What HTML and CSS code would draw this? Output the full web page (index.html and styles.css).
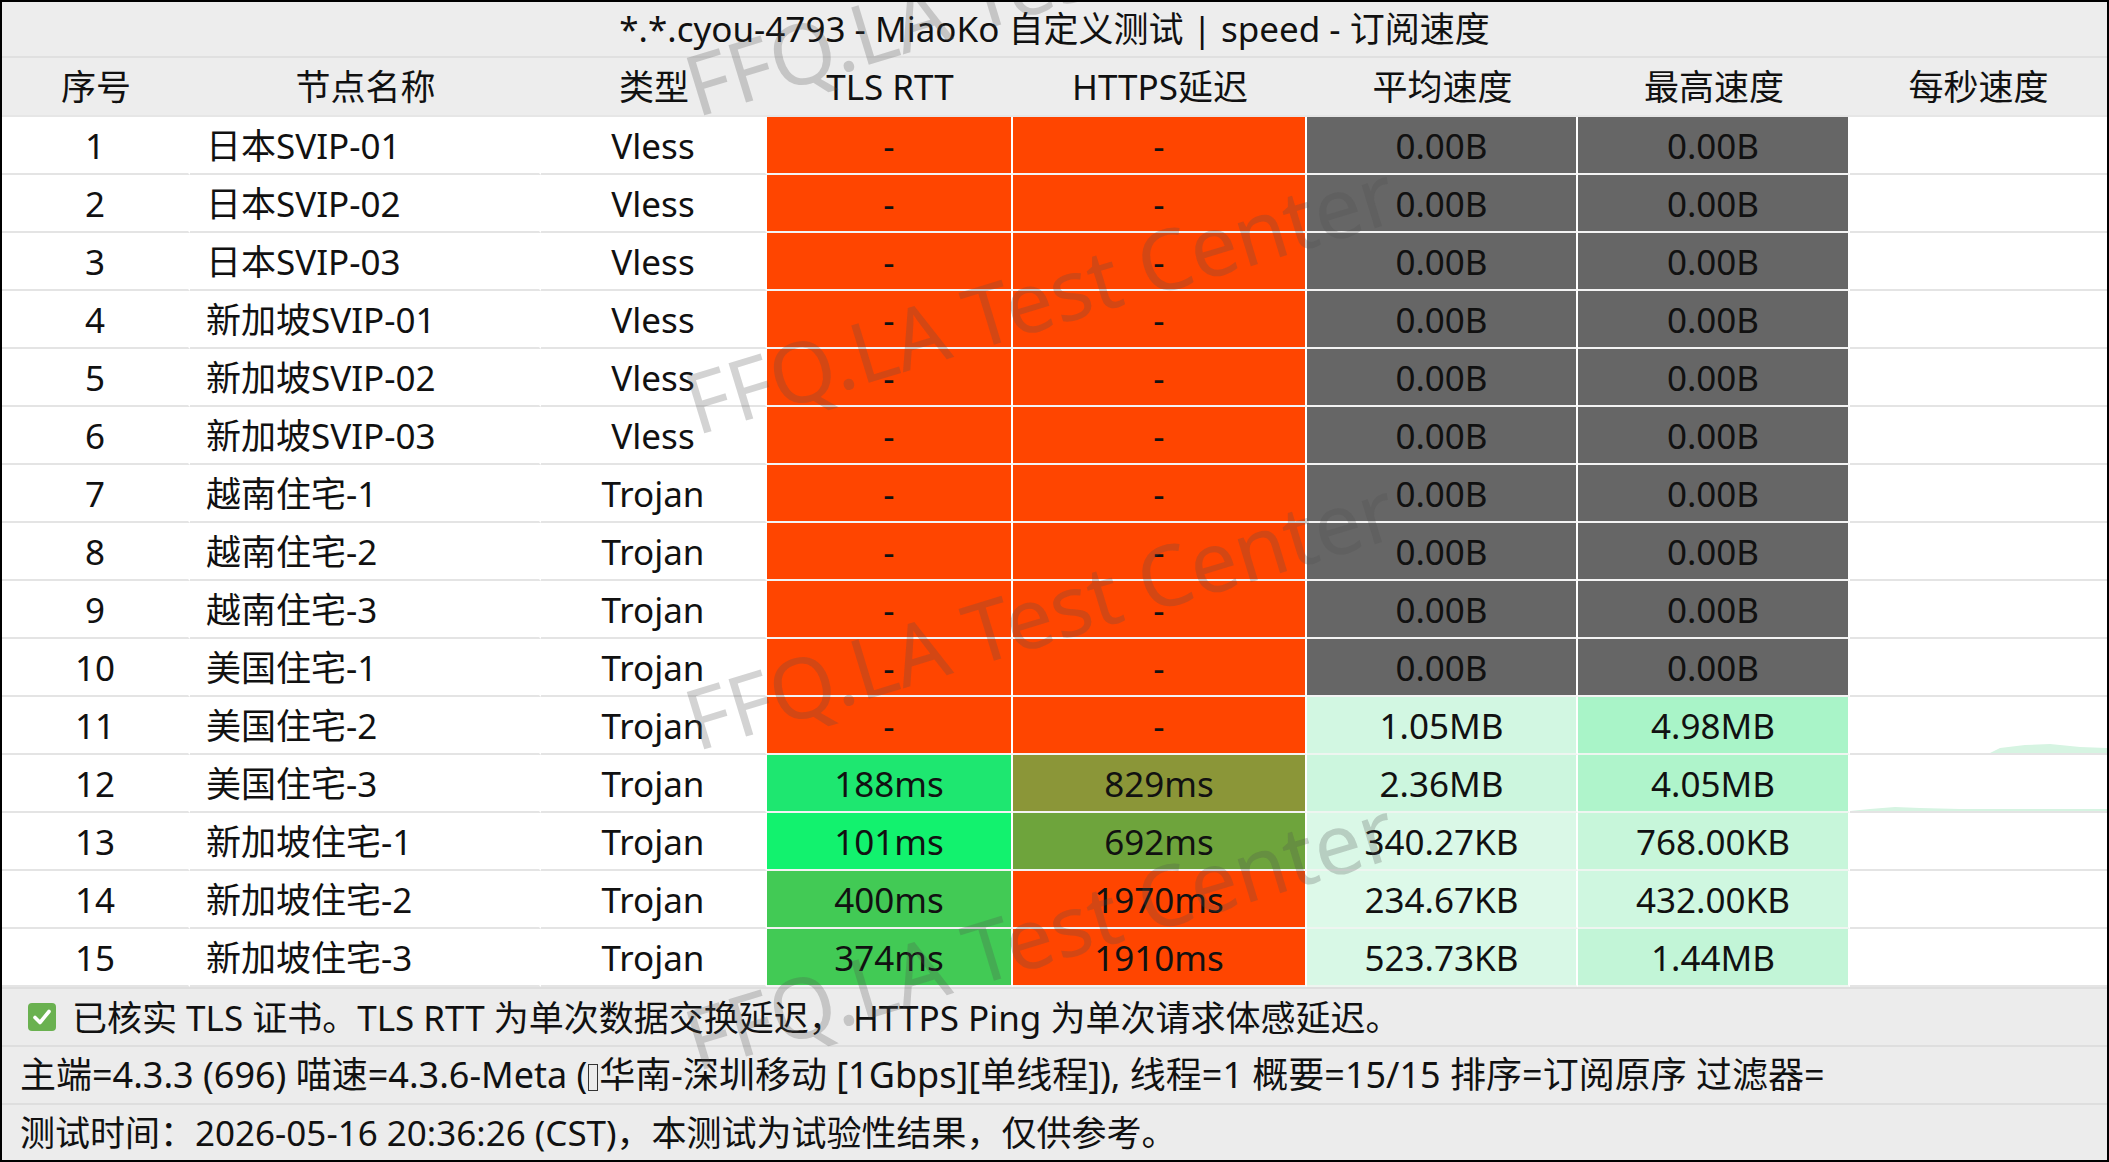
FILE: index.html
```html
<!DOCTYPE html>
<html lang="zh-CN">
<head>
<meta charset="utf-8">
<title>MiaoKo 自定义测试</title>
<link rel="stylesheet" href="styles.css">
</head>
<body>
<div class="frame">
  <div class="row title-row"><div class="title">*.*.cyou-4793 - MiaoKo 自定义测试 | speed - 订阅速度</div></div>
  <div class="row head">
    <div class="c">序号</div><div class="c">节点名称</div><div class="c">类型</div><div class="c">TLS RTT</div><div class="c">HTTPS延迟</div><div class="c">平均速度</div><div class="c">最高速度</div><div class="c">每秒速度</div>
  </div>

  <div class="row data"><div class="c">1</div><div class="c name">日本SVIP-01</div><div class="c">Vless</div><div class="c red">-</div><div class="c red">-</div><div class="c gray">0.00B</div><div class="c gray">0.00B</div><div class="c last"></div></div>
  <div class="row data"><div class="c">2</div><div class="c name">日本SVIP-02</div><div class="c">Vless</div><div class="c red">-</div><div class="c red">-</div><div class="c gray">0.00B</div><div class="c gray">0.00B</div><div class="c last"></div></div>
  <div class="row data"><div class="c">3</div><div class="c name">日本SVIP-03</div><div class="c">Vless</div><div class="c red">-</div><div class="c red">-</div><div class="c gray">0.00B</div><div class="c gray">0.00B</div><div class="c last"></div></div>
  <div class="row data"><div class="c">4</div><div class="c name">新加坡SVIP-01</div><div class="c">Vless</div><div class="c red">-</div><div class="c red">-</div><div class="c gray">0.00B</div><div class="c gray">0.00B</div><div class="c last"></div></div>
  <div class="row data"><div class="c">5</div><div class="c name">新加坡SVIP-02</div><div class="c">Vless</div><div class="c red">-</div><div class="c red">-</div><div class="c gray">0.00B</div><div class="c gray">0.00B</div><div class="c last"></div></div>
  <div class="row data"><div class="c">6</div><div class="c name">新加坡SVIP-03</div><div class="c">Vless</div><div class="c red">-</div><div class="c red">-</div><div class="c gray">0.00B</div><div class="c gray">0.00B</div><div class="c last"></div></div>
  <div class="row data"><div class="c">7</div><div class="c name">越南住宅-1</div><div class="c">Trojan</div><div class="c red">-</div><div class="c red">-</div><div class="c gray">0.00B</div><div class="c gray">0.00B</div><div class="c last"></div></div>
  <div class="row data"><div class="c">8</div><div class="c name">越南住宅-2</div><div class="c">Trojan</div><div class="c red">-</div><div class="c red">-</div><div class="c gray">0.00B</div><div class="c gray">0.00B</div><div class="c last"></div></div>
  <div class="row data"><div class="c">9</div><div class="c name">越南住宅-3</div><div class="c">Trojan</div><div class="c red">-</div><div class="c red">-</div><div class="c gray">0.00B</div><div class="c gray">0.00B</div><div class="c last"></div></div>
  <div class="row data"><div class="c">10</div><div class="c name">美国住宅-1</div><div class="c">Trojan</div><div class="c red">-</div><div class="c red">-</div><div class="c gray">0.00B</div><div class="c gray">0.00B</div><div class="c last"></div></div>
  <div class="row data"><div class="c">11</div><div class="c name">美国住宅-2</div><div class="c">Trojan</div><div class="c red">-</div><div class="c red">-</div><div class="c sp-a1">1.05MB</div><div class="c sp-m1">4.98MB</div><div class="c last"><svg class="spark" viewBox="0 0 257 56" preserveAspectRatio="none"><path d="M140 56 L150 51 L175 48 L200 47 L230 50 L257 51 L257 56 Z" fill="#d6f4e2"/></svg></div></div>
  <div class="row data"><div class="c">12</div><div class="c name">美国住宅-3</div><div class="c">Trojan</div><div class="c g188">188ms</div><div class="c o829">829ms</div><div class="c sp-a2">2.36MB</div><div class="c sp-m2">4.05MB</div><div class="c last"><svg class="spark" viewBox="0 0 257 56" preserveAspectRatio="none"><path d="M0 56 L20 54 L45 52 L70 53 L110 54 L257 54 L257 56 Z" fill="#d6f4e2"/></svg></div></div>
  <div class="row data"><div class="c">13</div><div class="c name">新加坡住宅-1</div><div class="c">Trojan</div><div class="c g101">101ms</div><div class="c o692">692ms</div><div class="c sp-a3">340.27KB</div><div class="c sp-m3">768.00KB</div><div class="c last"></div></div>
  <div class="row data"><div class="c">14</div><div class="c name">新加坡住宅-2</div><div class="c">Trojan</div><div class="c g400">400ms</div><div class="c red">1970ms</div><div class="c sp-a4">234.67KB</div><div class="c sp-m4">432.00KB</div><div class="c last"></div></div>
  <div class="row data"><div class="c">15</div><div class="c name">新加坡住宅-3</div><div class="c">Trojan</div><div class="c g374">374ms</div><div class="c red">1910ms</div><div class="c sp-a5">523.73KB</div><div class="c sp-m5">1.44MB</div><div class="c last"></div></div>

  <div class="row foot f1"><span class="check"><svg viewBox="0 0 28 28" width="28" height="28"><rect x="0" y="0" width="28" height="28" rx="4" fill="#6ab150"/><path d="M7 14.5 L12 19.5 L21 8.5" fill="none" stroke="#fff" stroke-width="3.6" stroke-linecap="round" stroke-linejoin="round"/></svg></span><span>已核实 TLS 证书。TLS RTT 为单次数据交换延迟，&nbsp;HTTPS Ping 为单次请求体感延迟。</span></div>
  <div class="row foot f2"><span>主端=4.3.3 (696) 喵速=4.3.6-Meta (<span class="tofu"></span>华南-深圳移动 [1Gbps][单线程]), 线程=1 概要=15/15 排序=订阅原序 过滤器=</span></div>
  <div class="row foot f3"><span>测试时间：2026-05-16 20:36:26 (CST)，本测试为试验性结果，仅供参考。</span></div>

  <div class="wm wm1">FFQ.LA Test Center</div>
  <div class="wm wm2">FFQ.LA Test Center</div>
  <div class="wm wm3">FFQ.LA Test Center</div>
  <div class="wm wm4">FFQ.LA Test Center</div>
</div>
</body>
</html>
```

FILE: styles.css
```css
* { box-sizing: border-box; }
html, body { margin: 0; padding: 0; background: #000; }
body {
  font-family: "Noto Sans", "Noto Sans CJK SC", sans-serif;
  color: #111;
}
.frame {
  position: relative;
  width: 2109px;
  height: 1162px;
  border: 2px solid #000;
  background: #fff;
  display: flex;
  flex-direction: column;
  overflow: hidden;
}
.row {
  flex: 0 0 58px;
  height: 58px;
}
.title-row {
  flex-basis: 56px;
  height: 56px;
  background: #ededed;
  border-bottom: 2px solid #e0e0e0;
  display: flex;
  align-items: center;
  justify-content: center;
  font-size: 35px;
}
.title { line-height: 1; padding-bottom: 2px; }

.head, .data {
  display: grid;
  grid-template-columns: 188px 351px 226px 246px 294px 271px 272px 1fr;
  font-size: 35px;
}
.head { flex-basis: 59px; height: 59px; background: #ededed; }
.head .c { border-bottom: 2px solid #e6e6e6; }
.c {
  display: flex;
  align-items: center;
  justify-content: center;
  line-height: 1;
  white-space: nowrap;
  border-bottom: 2px solid #e4e4e4;
  border-right: 2px solid #fff;
  position: relative;
}
.head .c { border-right: none; }
.data .c.last { border-right: none; }
.name { justify-content: flex-start; padding-left: 16px; }

.red { background: #ff4500; border-bottom-color: #f3f3f3; }
.gray { background: #666666; border-bottom-color: #f3f3f3; }
.g188 { background: #1ee770; border-bottom-color: #f3f3f3; }
.g101 { background: #12f26e; border-bottom-color: #f3f3f3; }
.g400 { background: #42ca55; border-bottom-color: #f3f3f3; }
.g374 { background: #42ca55; border-bottom-color: #f3f3f3; }
.o829 { background: #8b9638; border-bottom-color: #f3f3f3; }
.o692 { background: #6ea43c; border-bottom-color: #f3f3f3; }
.sp-a1 { background: #d2f7e2; }
.sp-m1 { background: #a9f4c8; }
.sp-a2 { background: #ccf6de; }
.sp-m2 { background: #aff4cb; }
.sp-a3 { background: #daf8e7; }
.sp-m3 { background: #c7f6da; }
.sp-a4 { background: #ddf9e9; }
.sp-m4 { background: #cff7e0; }
.sp-a5 { background: #d8f8e6; }
.sp-m5 { background: #c2f5d7; }
.sp-a1, .sp-m1, .sp-a2, .sp-m2, .sp-a3, .sp-m3, .sp-a4, .sp-m4, .sp-a5, .sp-m5 { border-bottom-color: #eef5f0; }

.spark {
  position: absolute;
  left: 0; top: 0;
  width: 100%;
  height: 100%;
}

.foot {
  background: #ececec;
  border-top: 2px solid #dedede;
  display: flex;
  align-items: center;
  padding-left: 18px;
  font-size: 35px;
  line-height: 1;
  white-space: nowrap;
}
.f2 { font-size: 36px; }
.f3 { flex-basis: 57px; height: 57px; }
.check { display: inline-flex; margin: 0 16px 0 8px; }
.check svg { display: block; }
.tofu {
  display: inline-block;
  width: 10px;
  height: 27px;
  border: 1.5px solid #333;
  vertical-align: -3px;
  margin: 0 1px;
}

.wm {
  position: absolute;
  left: 692px;
  font-size: 84px;
  line-height: 1;
  white-space: nowrap;
  color: rgba(80, 80, 80, 0.25);
  transform-origin: 0 78%;
  transform: rotate(-17deg);
  pointer-events: none;
}
.wm1 { top: 42px; }
.wm2 { top: 360px; }
.wm3 { top: 676px; }
.wm4 { top: 996px; }
```
